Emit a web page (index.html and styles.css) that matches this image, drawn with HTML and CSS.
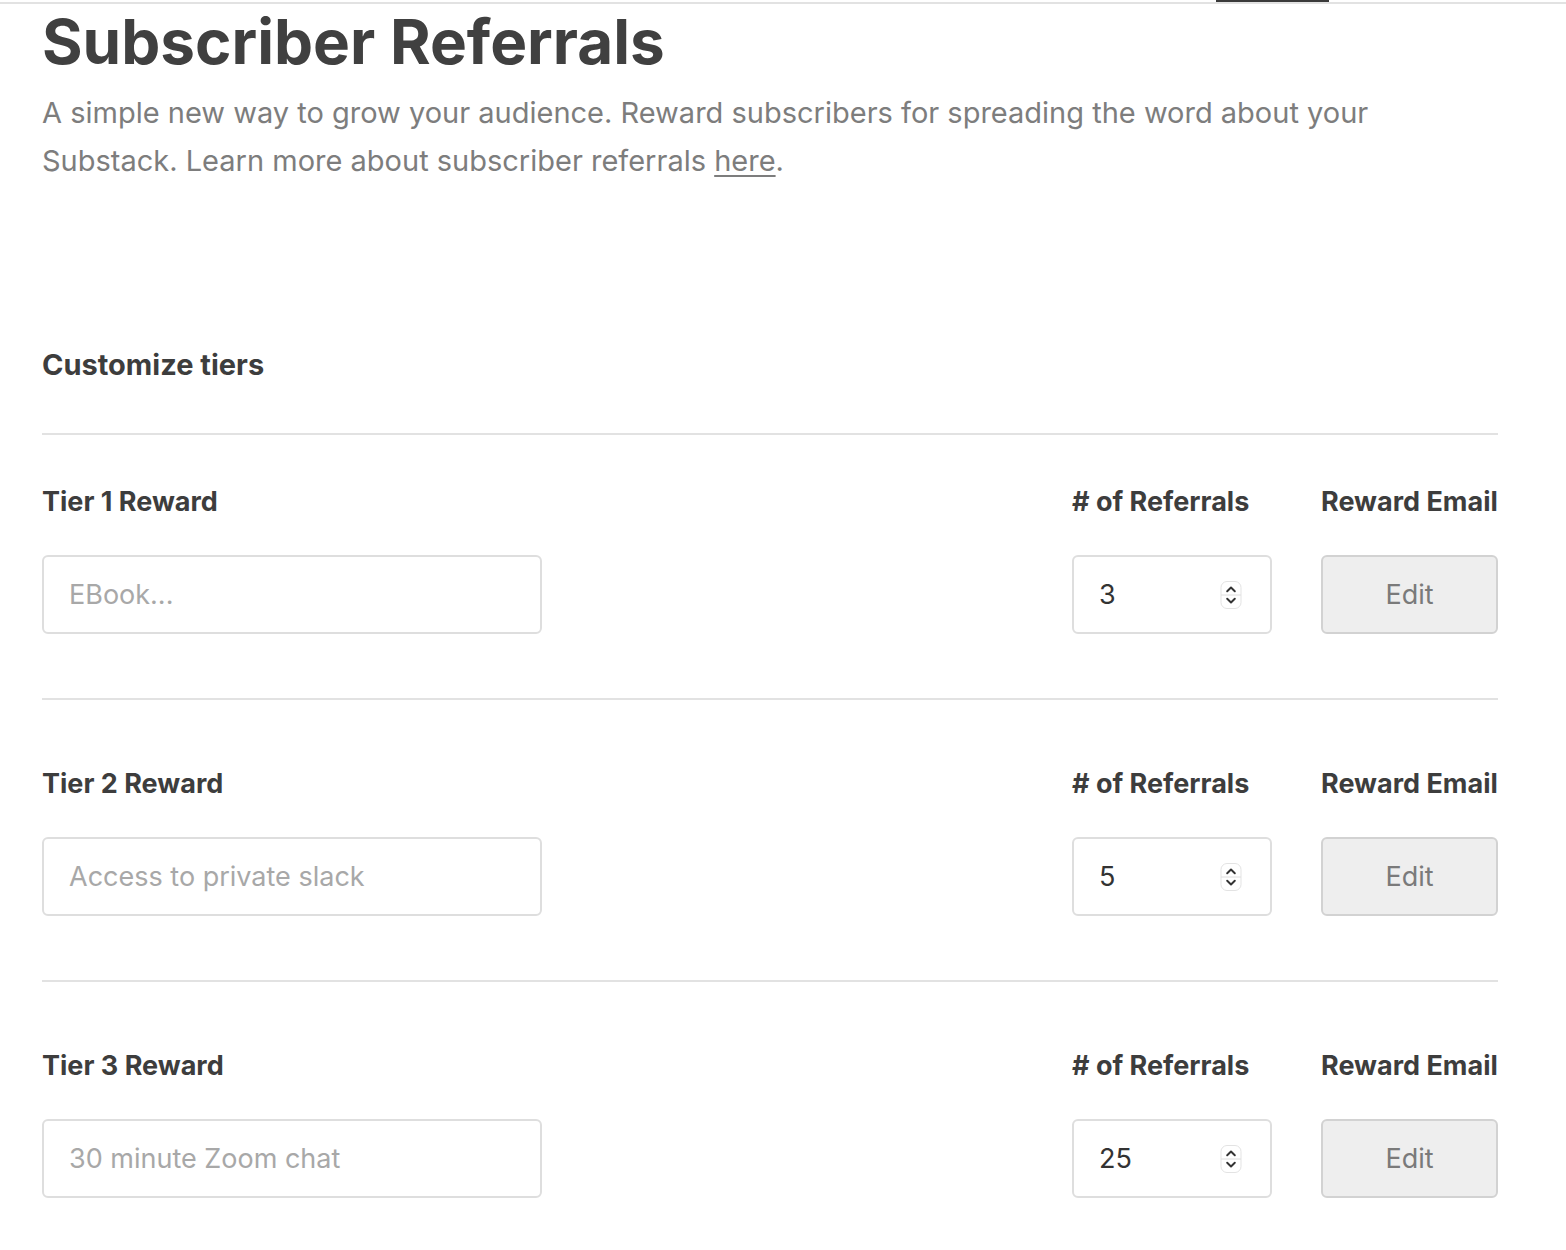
FILE: index.html
```html
<!DOCTYPE html>
<html lang="en">
<head>
<meta charset="utf-8">
<title>Subscriber Referrals</title>
<link rel="stylesheet" href="styles.css">
</head>
<body>
<div class="topbar"><div class="topbar-active"></div></div>
<main class="page">
  <h1 class="title">Subscriber Referrals</h1>
  <p class="lead">A simple new way to grow your audience. Reward subscribers for spreading the word about your Substack. Learn more about subscriber referrals <a href="#" class="lead-link">here</a>.</p>

  <h2 class="section-title">Customize tiers</h2>

  <section class="tiers">
    <div class="tier">
      <div class="label">Tier 1 Reward</div>
      <div class="spacer"></div>
      <div class="label">#&nbsp;of Referrals</div>
      <div class="label">Reward Email</div>
      <input class="text-input" type="text" placeholder="EBook...">
      <div class="spacer"></div>
      <div class="number-input"><span class="number-value">3</span><svg class="spinner" width="22" height="28" viewBox="0 0 22 28"><rect x="1" y="0.5" width="20" height="27" rx="6" fill="#fff" stroke="#e3e3e3"/><line x1="1" y1="14" x2="21" y2="14" stroke="#dedede"/><path d="M7.2 10.2 L11 6.6 L14.8 10.2" fill="none" stroke="#333" stroke-width="2" stroke-linecap="round" stroke-linejoin="round"/><path d="M7.2 17.8 L11 21.4 L14.8 17.8" fill="none" stroke="#333" stroke-width="2" stroke-linecap="round" stroke-linejoin="round"/></svg></div>
      <button class="edit-btn" type="button">Edit</button>
    </div>
    <div class="tier">
      <div class="label">Tier 2 Reward</div>
      <div class="spacer"></div>
      <div class="label">#&nbsp;of Referrals</div>
      <div class="label">Reward Email</div>
      <input class="text-input" type="text" placeholder="Access to private slack">
      <div class="spacer"></div>
      <div class="number-input"><span class="number-value">5</span><svg class="spinner" width="22" height="28" viewBox="0 0 22 28"><rect x="1" y="0.5" width="20" height="27" rx="6" fill="#fff" stroke="#e3e3e3"/><line x1="1" y1="14" x2="21" y2="14" stroke="#dedede"/><path d="M7.2 10.2 L11 6.6 L14.8 10.2" fill="none" stroke="#333" stroke-width="2" stroke-linecap="round" stroke-linejoin="round"/><path d="M7.2 17.8 L11 21.4 L14.8 17.8" fill="none" stroke="#333" stroke-width="2" stroke-linecap="round" stroke-linejoin="round"/></svg></div>
      <button class="edit-btn" type="button">Edit</button>
    </div>
    <div class="tier">
      <div class="label">Tier 3 Reward</div>
      <div class="spacer"></div>
      <div class="label">#&nbsp;of Referrals</div>
      <div class="label">Reward Email</div>
      <input class="text-input" type="text" placeholder="30 minute Zoom chat">
      <div class="spacer"></div>
      <div class="number-input"><span class="number-value">25</span><svg class="spinner" width="22" height="28" viewBox="0 0 22 28"><rect x="1" y="0.5" width="20" height="27" rx="6" fill="#fff" stroke="#e3e3e3"/><line x1="1" y1="14" x2="21" y2="14" stroke="#dedede"/><path d="M7.2 10.2 L11 6.6 L14.8 10.2" fill="none" stroke="#333" stroke-width="2" stroke-linecap="round" stroke-linejoin="round"/><path d="M7.2 17.8 L11 21.4 L14.8 17.8" fill="none" stroke="#333" stroke-width="2" stroke-linecap="round" stroke-linejoin="round"/></svg></div>
      <button class="edit-btn" type="button">Edit</button>
    </div>
  </section>
</main>
</body>
</html>
```

FILE: styles.css
```css
html, body {
  margin: 0;
  padding: 0;
  background: #fff;
}

body {
  font-family: Inter, "Noto Sans", "Liberation Sans", sans-serif;
  color: #3d3d3d;
}

.topbar {
  height: 2px;
  border-bottom: 2px solid #e2e2e2;
  display: flex;
  justify-content: flex-start;
}

.topbar-active {
  width: 113px;
  height: 2px;
  margin-left: 1216px;
  background: #3a3a3a;
}

.page {
  width: 1456px;
  padding: 0 0 0 42px;
}

.title {
  margin: 0;
  font-size: 62px;
  line-height: 76px;
  font-weight: 700;
  letter-spacing: 0;
  color: #404040;
}

.lead {
  margin: 9px 0 0 0;
  font-size: 29px;
  line-height: 48px;
  color: #7d7d7d;
  font-weight: 400;
}

.lead-link {
  color: #7d7d7d;
  text-decoration: underline;
  text-underline-offset: 4px;
  text-decoration-thickness: 2px;
}

.section-title {
  margin: 160px 0 0 0;
  font-size: 29px;
  line-height: 40px;
  font-weight: 700;
  color: #3d3d3d;
}

.tiers {
  margin-top: 48px;
  border-top: 2px solid #e2e2e2;
}

.tier {
  padding: 50px 0 64px 0;
  display: grid;
  grid-template-columns: 500px 1fr 200px 177px;
  column-gap: 49px;
  row-gap: 36px;
  align-items: center;
}

.tier + .tier {
  border-top: 2px solid #e2e2e2;
  padding-top: 67px;
}

.label {
  font-size: 27px;
  line-height: 34px;
  font-weight: 700;
  color: #3d3d3d;
  white-space: nowrap;
}

.text-input {
  box-sizing: border-box;
  width: 500px;
  height: 79px;
  margin: 0;
  padding: 0 25px;
  border: 2px solid #dedede;
  border-radius: 6px;
  font-family: inherit;
  font-size: 27px;
  color: #333;
  background: #fff;
  outline: none;
}

.text-input::placeholder {
  color: #a8a8a8;
}

.number-input {
  box-sizing: border-box;
  height: 79px;
  border: 2px solid #dedede;
  border-radius: 6px;
  display: flex;
  align-items: center;
  justify-content: space-between;
  padding: 0 28px 0 25px;
  background: #fff;
}

.number-value {
  font-size: 27px;
  color: #333;
}

.spinner {
  display: block;
}

.edit-btn {
  box-sizing: border-box;
  height: 79px;
  width: 177px;
  margin: 0;
  border: 2px solid #d2d2d2;
  border-radius: 6px;
  background: #eeeeee;
  font-family: inherit;
  font-size: 27px;
  color: #7a7a7a;
  cursor: pointer;
}
```
